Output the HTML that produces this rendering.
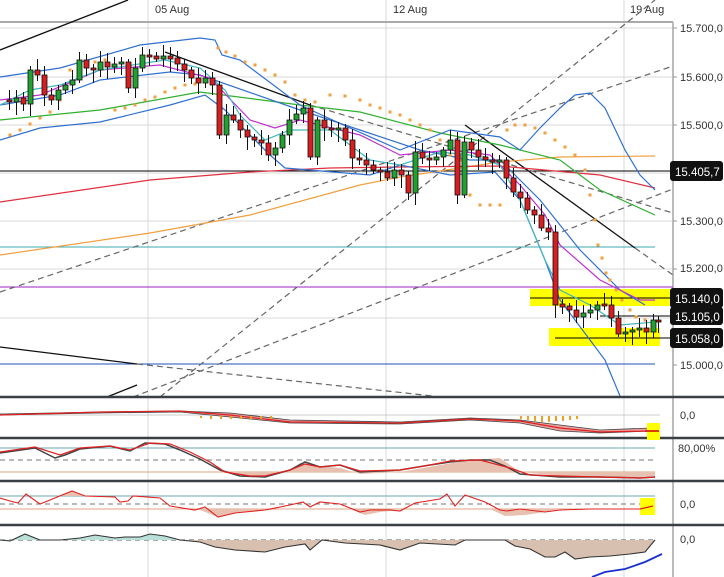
<!DOCTYPE html>
<html><head><meta charset="utf-8"><style>
body{margin:0;background:#fff;width:724px;height:577px;overflow:hidden;font-family:"Liberation Sans",sans-serif}
svg{display:block}
.ax{font-size:11px;fill:#333}
.lb{font-size:11.5px;fill:#fff}
</style></head><body>
<svg id="s" width="724" height="577" viewBox="0 0 724 577" xmlns="http://www.w3.org/2000/svg">
<rect width="724" height="577" fill="#fff"/>
<!-- grid -->
<g stroke="#d8d8d8" stroke-width="1">
<line x1="0" y1="28" x2="673" y2="28"/><line x1="0" y1="77" x2="673" y2="77"/><line x1="0" y1="125" x2="673" y2="125"/><line x1="0" y1="173" x2="673" y2="173"/><line x1="0" y1="221" x2="673" y2="221"/><line x1="0" y1="269" x2="673" y2="269"/><line x1="0" y1="318" x2="673" y2="318"/>
<line x1="148" y1="0" x2="148" y2="577"/><line x1="386" y1="0" x2="386" y2="577"/><line x1="624" y1="0" x2="624" y2="577"/>
</g>
<line x1="0" y1="22" x2="673" y2="22" stroke="#aaa" stroke-width="2"/>
<line x1="673" y1="22" x2="673" y2="577" stroke="#bbb" stroke-width="2"/>
<text x="155" y="13" class="ax">05 Aug</text><text x="393" y="13" class="ax">12 Aug</text><text x="630" y="13" class="ax">19 Aug</text>
<!-- highlights -->
<rect x="530" y="289" width="142" height="17" fill="#ffff00"/>
<rect x="549" y="328" width="111" height="18" fill="#ffff00"/>
<!-- horizontal levels -->
<line x1="0" y1="171" x2="673" y2="171" stroke="#000"/>
<line x1="0" y1="247" x2="655" y2="247" stroke="#3aa9b0"/>
<line x1="0" y1="287" x2="673" y2="287" stroke="#a020c0"/>
<line x1="0" y1="364" x2="655" y2="364" stroke="#2050b8"/>
<line x1="530" y1="298" x2="673" y2="298" stroke="#000"/>
<line x1="600" y1="316" x2="673" y2="316" stroke="#000"/>
<line x1="555" y1="338" x2="673" y2="338" stroke="#000"/>
<!-- trend lines -->
<g fill="none" stroke="#666" stroke-width="1.2" stroke-dasharray="6,4">
<line x1="0" y1="292" x2="673" y2="66"/>
<line x1="160" y1="397" x2="655" y2="0"/>
<line x1="133" y1="397" x2="673" y2="189"/>
<line x1="137" y1="364" x2="433" y2="396"/>
<line x1="310" y1="105" x2="673" y2="213"/>
<line x1="635" y1="248" x2="673" y2="275"/>
</g>
<g stroke="#111" stroke-width="1.3">
<line x1="0" y1="50" x2="128" y2="0"/>
<line x1="165" y1="52" x2="310" y2="105"/>
<line x1="465" y1="125" x2="635" y2="248"/>
<line x1="0" y1="347" x2="137" y2="364"/>
<line x1="107" y1="397" x2="137" y2="385"/>
</g>
<g fill="none" stroke-width="1.2">
<polyline stroke="#f0a040" points="0,255 150,233 250,215 360,185 400,177 500,162 560,157 655,156"/>
<polyline stroke="#e03040" points="0,202 150,180 250,172 330,168 400,167 500,166 600,175 655,188"/>
<polyline stroke="#30b030" points="0,120 100,110 200,92 300,105 360,112 440,133 500,145 560,160 600,190 655,215"/>
<polyline stroke="#3070d0" points="0,77 60,68 140,45 200,38 215,40 222,55 240,60 300,105 350,128 400,150 450,130 500,137 520,150 540,128 560,108 575,95 590,93 605,108 625,150 640,175 655,190"/>
<polyline stroke="#3070d0" points="0,105 60,95 100,80 170,72 200,75 300,110 360,130 420,150 470,160 500,160 520,180 540,200 580,250 620,290 645,305"/>
<polyline stroke="#3070d0" points="0,140 40,128 100,122 170,105 205,95 225,110 270,155 285,168 370,175 400,165 450,175 495,172 520,200 545,260 560,300 590,340 605,360 620,396"/>
<polyline stroke="#c030d0" points="0,100 40,95 100,70 160,65 210,78 250,120 275,128 300,120 360,135 400,155 450,150 490,155 520,185 545,215 560,245 600,280 640,300 655,300"/>
<polyline stroke="#40b8c0" points="0,105 30,90 60,85 100,70 165,60 200,68 225,90 240,115 265,140 290,130 330,130 370,160 400,165 440,152 470,155 500,165 520,200 545,260 560,290 590,305 620,325 655,322"/>
</g>
<g id="sar" fill="#f0a040"></g>
<g id="cd"></g>
<!-- panel separators -->
<g stroke="#3a3f44" stroke-width="2.5">
<line x1="0" y1="397" x2="724" y2="397"/><line x1="0" y1="438" x2="724" y2="438"/><line x1="0" y1="481" x2="724" y2="481"/><line x1="0" y1="525" x2="724" y2="525"/>
</g>
<!-- panel 2 MACD -->
<line x1="0" y1="415" x2="660" y2="415" stroke="#bbb" stroke-width="0.8"/>
<path d="M0,415 L100,413 L180,412 L230,417 L290,423 L400,424 L470,420 L520,423 L560,431 L600,433 L650,431 L650,428 L600,430 L560,425 L520,420 L470,418 L400,422 L290,420 L230,413 L180,411 L100,412 L0,414Z" fill="#e8a0a0" stroke="#444" stroke-width="0.8"/>
<polyline fill="none" stroke="#e02020" stroke-width="1.2" points="0,415 100,412 180,411 230,415 290,422 400,423 470,419 520,421 560,428 600,432 650,431"/>
<g fill="#f0a020"><rect x="520" y="416" width="2" height="3"/><rect x="527" y="416" width="2" height="4"/><rect x="534" y="416" width="2" height="5"/><rect x="541" y="416" width="2" height="6"/><rect x="548" y="416" width="2" height="6"/><rect x="555" y="416" width="2" height="5"/><rect x="562" y="416" width="2" height="5"/><rect x="569" y="416" width="2" height="4"/><rect x="576" y="416" width="2" height="3"/><rect x="200" y="416" width="2" height="2"/><rect x="210" y="416" width="2" height="3"/><rect x="220" y="416" width="2" height="3"/><rect x="230" y="416" width="2" height="3"/><rect x="240" y="416" width="2" height="3"/><rect x="250" y="416" width="2" height="3"/><rect x="260" y="416" width="2" height="3"/><rect x="270" y="416" width="2" height="3"/></g>
<rect x="647" y="423" width="13" height="17" fill="#ffff00"/>
<line x1="645" y1="431" x2="659" y2="431" stroke="#c00" stroke-width="1.5"/>
<text x="680" y="419" class="ax">0,0</text>
<!-- panel 3 stoch -->
<line x1="0" y1="448" x2="655" y2="448" stroke="#6aa6b0"/>
<line x1="0" y1="460" x2="655" y2="460" stroke="#777" stroke-dasharray="5,4"/>
<line x1="0" y1="472" x2="655" y2="472" stroke="#e0a080"/>
<path d="M230,472 L250,476 L265,477 L290,470 L300,463 L320,466 L340,468 L360,474 L400,472 L440,465 L470,460 L500,458 L520,472 L560,476 L600,478 L640,477 L655,476 L655,472Z" fill="#e8c0b0"/>
<polyline fill="none" stroke="#444" stroke-width="1.5" points="0,453 35,448 55,458 65,455 80,449 110,446 130,451 145,443 165,444 180,450 200,459 220,470 240,476 265,477 290,470 305,462 320,467 340,465 360,472 400,470 430,465 450,462 470,460 490,460 505,466 520,474 560,477 600,477 640,478 655,477"/>
<polyline fill="none" stroke="#e02020" stroke-width="1.2" points="0,452 35,447 60,455 80,448 110,446 130,450 150,443 170,444 190,452 210,462 225,472 250,476 265,476 290,470 305,464 320,467 340,465 360,471 400,470 430,465 450,461 480,460 510,468 530,475 560,476 600,477 640,478 655,477"/>
<text x="678" y="452" class="ax">80,00%</text>
<!-- panel 4 -->
<line x1="0" y1="496" x2="655" y2="496" stroke="#6aa6b0"/>
<line x1="0" y1="504" x2="655" y2="504" stroke="#777" stroke-dasharray="5,4"/>
<line x1="0" y1="509" x2="655" y2="509" stroke="#e0a080"/>
<path d="M60,496 L72,491 L85,496Z M170,509 L200,510 L218,517 L235,513 L250,512 L270,510 L300,509Z M350,509 L365,515 L380,512 L400,510Z M490,509 L505,516 L525,515 L545,512 L560,510 L600,509Z" fill="#e8c0b0"/>
<polyline fill="none" stroke="#e02020" stroke-width="1.1" points="0,498 10,501 18,503 26,494 40,504 50,500 72,491 85,496 115,497 120,502 128,501 133,496 160,498 170,506 195,510 205,507 218,517 235,513 265,510 290,505 303,502 310,507 320,502 340,504 360,512 370,510 390,510 400,511 415,503 440,499 447,494 455,506 465,495 485,502 500,510 507,511 520,509 545,512 560,510 590,509 620,509 640,509 653,506"/>
<rect x="640" y="498" width="15" height="17" fill="#ffff00"/>
<line x1="640" y1="509" x2="653" y2="506" stroke="#e02020" stroke-width="1.3"/>
<text x="680" y="508" class="ax">0,0</text>
<!-- panel 5 -->
<line x1="0" y1="540" x2="655" y2="540" stroke="#555" stroke-dasharray="5,4"/>
<path d="M0,540 L10,541 L25,534 L40,540 L60,540 L80,538 L95,535 L115,538 L125,537 L140,537 L150,534 L165,536 L180,540Z" fill="#b8e0d8"/>
<path d="M180,540 L200,542 L215,547 L235,550 L265,552 L285,547 L305,544 L310,550 L322,540 L345,543 L380,545 L400,550 L420,543 L455,545 L465,540 L505,540 L515,546 L530,549 L545,557 L555,557 L565,552 L575,559 L590,557 L610,556 L630,554 L645,552 L655,540Z" fill="#d8c0b0"/>
<polyline fill="none" stroke="#333" stroke-width="1.1" points="0,540 10,541 25,534 40,540 60,540 80,538 95,535 115,538 125,537 140,537 150,534 165,536 180,540 200,542 215,547 235,550 265,552 285,547 305,544 310,550 322,540 345,543 380,545 400,550 420,543 455,545 465,540 505,540 515,546 530,549 545,557 555,557 565,552 575,559 590,557 610,556 630,554 645,552 655,540"/>
<polyline fill="none" stroke="#1a30d0" stroke-width="1.8" points="592,577 605,572 625,569 645,562 662,554"/>
<text x="680" y="543" class="ax">0,0</text>
<!-- axis ticks & labels -->
<g stroke="#999"><line x1="673" y1="28" x2="677" y2="28"/><line x1="673" y1="77" x2="677" y2="77"/><line x1="673" y1="125" x2="677" y2="125"/><line x1="673" y1="221" x2="677" y2="221"/><line x1="673" y1="269" x2="677" y2="269"/><line x1="673" y1="365" x2="677" y2="365"/></g>
<text x="680" y="32" class="ax">15.700,0</text><text x="680" y="81" class="ax">15.600,0</text><text x="680" y="129" class="ax">15.500,0</text><text x="680" y="225" class="ax">15.300,0</text><text x="680" y="272" class="ax">15.200,0</text><text x="680" y="369" class="ax">15.000,0</text>
<rect x="670" y="161" width="53" height="20" rx="3" fill="#111"/><text x="675" y="176" class="lb">15.405,7</text>
<rect x="670" y="288" width="53" height="20" rx="3" fill="#111"/><text x="675" y="303" class="lb">15.140,0</text>
<rect x="670" y="307" width="53" height="18" rx="3" fill="#111"/><text x="675" y="321" class="lb">15.105,0</text>
<rect x="670" y="328" width="53" height="20" rx="3" fill="#111"/><text x="675" y="343" class="lb">15.058,0</text>
</svg>
<script>
var C=[[0,100],[7,102],[14,98],[21,104],[28,70],[35,75],[42,95],[49,100],[56,90],[63,85],[70,80],[77,60],[84,68],[91,70],[98,62],[105,67],[112,64],[119,62],[126,88],[133,68],[140,55],[147,57],[154,58],[161,57],[168,58],[175,64],[182,70],[189,78],[196,83],[203,78],[210,85],[217,135],[224,115],[231,120],[238,130],[245,137],[252,140],[259,143],[266,155],[273,148],[280,135],[287,120],[294,114],[301,108],[308,157],[315,120],[322,128],[329,130],[336,128],[343,140],[350,158],[357,160],[364,165],[371,170],[378,172],[385,178],[392,170],[399,175],[406,193],[413,152],[420,158],[427,160],[434,157],[441,150],[448,140],[455,195],[462,142],[469,150],[476,157],[483,160],[490,162],[497,160],[504,178],[511,192],[518,198],[525,210],[532,215],[539,228],[546,232],[553,305],[560,306],[567,310],[574,317],[581,313],[588,310],[595,305],[602,305],[609,318],[616,334],[623,332],[630,330],[637,328],[644,332],[651,320],[656,322]];
var g='',hl='';
for(var i=1;i<C.length;i++){var x=C[i][0],o=C[i-1][1],c=C[i][1];var t=Math.min(o,c),b=Math.max(o,c);if(b-t<2){t-=1;b+=1;}
var hi=t-3-(i*7%9),lo=b+3+(i*5%11);
g+='<line x1="'+(x+2.5)+'" y1="'+hi+'" x2="'+(x+2.5)+'" y2="'+lo+'" stroke="#111"/>';
g+='<rect x="'+x+'" y="'+t+'" width="5" height="'+(b-t)+'" fill="'+(c<o?'#22a030':'#d81e1e')+'" stroke="#111" stroke-width="0.8"/>';}
document.getElementById('cd').innerHTML=g;
var S=[[10,135],[20,130],[30,124],[40,118],[50,112],[60,100],[70,70],[80,65],[95,62],[105,60],[115,110],[125,108],[135,105],[145,100],[155,97],[165,92],[175,88],[185,85],[195,84],[205,80],[218,48],[226,52],[235,56],[245,62],[255,65],[265,70],[275,75],[285,82],[295,95],[305,100],[315,102],[330,95],[345,96],[360,100],[370,105],[380,108],[390,112],[400,115],[410,120],[420,125],[430,130],[440,140],[450,155],[460,160],[470,195],[480,205],[490,205],[500,205],[507,130],[515,125],[525,125],[535,128],[545,133],[555,140],[565,147],[575,155],[585,170],[590,195],[595,220],[598,245],[602,258],[606,273],[610,280],[616,290],[622,300],[630,310],[636,317],[645,320]];
var s='';S.forEach(function(p){s+='<rect x="'+(p[0]-1.5)+'" y="'+(p[1]-1.5)+'" width="3" height="3"/>';});
document.getElementById('sar').innerHTML=s;
</script>
</body></html>
